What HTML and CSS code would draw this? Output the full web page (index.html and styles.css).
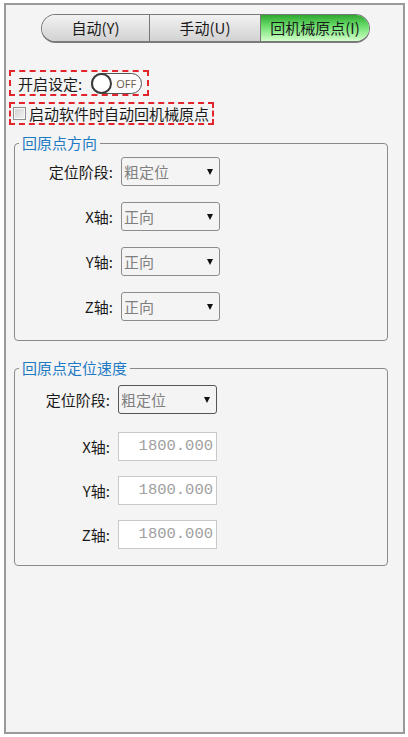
FILE: index.html
```html
<!DOCTYPE html>
<html lang="zh-CN">
  <head>
    <meta charset="UTF-8" />
    <meta name="viewport" content="width=device-width, initial-scale=1.0" />
    <title>回机械原点</title>
    <link rel="stylesheet" href="styles.css">
  </head>
  <body>
    <div class="panel">
      <div class="tabs">
        <div class="tab">自动(Y)</div>
        <div class="tab">手动(U)</div>
        <div class="tab active">回机械原点(I)</div>
      </div>

      <div class="mark switch-row">
        <span>开启设定:</span>
        <span class="switch">
          <span class="knob"></span>
          <span class="switch-text">OFF</span>
        </span>
      </div>

      <div class="mark check-row">
        <span class="box"></span>
        <span>启动软件时自动回机械原点</span>
      </div>

      <fieldset class="group direction">
        <legend>回原点方向</legend>
        <div class="row">
          <span class="label">定位阶段:</span>
          <div class="select">粗定位<span class="arrow"></span></div>
        </div>
        <div class="row">
          <span class="label">X轴:</span>
          <div class="select">正向<span class="arrow"></span></div>
        </div>
        <div class="row">
          <span class="label">Y轴:</span>
          <div class="select">正向<span class="arrow"></span></div>
        </div>
        <div class="row">
          <span class="label">Z轴:</span>
          <div class="select">正向<span class="arrow"></span></div>
        </div>
      </fieldset>

      <fieldset class="group speed">
        <legend>回原点定位速度</legend>
        <div class="row stage">
          <span class="label">定位阶段:</span>
          <div class="select dark">粗定位<span class="arrow"></span></div>
        </div>
        <div class="row">
          <span class="label">X轴:</span>
          <div class="num">1800.000</div>
        </div>
        <div class="row">
          <span class="label">Y轴:</span>
          <div class="num">1800.000</div>
        </div>
        <div class="row">
          <span class="label">Z轴:</span>
          <div class="num">1800.000</div>
        </div>
      </fieldset>
    </div>
  </body>
</html>
```

FILE: styles.css
```css
body {
  margin: 0;
  background: #ffffff;
  font-family: "Noto Sans CJK SC", "Noto Sans", sans-serif;
  font-size: 15px;
  color: #1a1a1a;
}
.panel {
  margin: 3px 0 0 4px;
  width: 401px;
  height: 731px;
  box-sizing: border-box;
  border: 2px solid #9a9a9a;
  background: #f4f4f4;
}
.tabs {
  display: flex;
  margin: 9px 0 0 35px;
  width: 329px;
  height: 29px;
  box-sizing: border-box;
  border: 1px solid #7a7a7a;
  border-bottom-width: 2px;
  border-radius: 15px;
  overflow: hidden;
}
.tab {
  box-sizing: border-box;
  text-align: center;
  line-height: 26px;
  background: linear-gradient(#f2f2f2, #d2d2d2);
}
.tab:nth-child(1) {
  width: 107px;
}
.tab:nth-child(2) {
  width: 111px;
  border-left: 1px solid #777;
}
.tab:nth-child(3) {
  width: 109px;
  border-left: 1px solid #777;
}
.tab.active {
  background: linear-gradient(#2fa82f, #6fe06f 45%, #d4ffcc);
}
.mark {
  display: flex;
  align-items: center;
  box-sizing: border-box;
  margin-left: 3px;
  border: 2px dashed #e2252d;
}
.switch-row {
  margin-top: 27px;
  width: 140px;
  height: 26px;
  padding-left: 7px;
}
.switch {
  display: flex;
  align-items: center;
  margin-left: 9px;
  width: 51px;
  height: 21px;
  box-sizing: border-box;
  border: 1px solid #555;
  border-radius: 11px;
  background: #fafafa;
}
.knob {
  width: 21px;
  height: 21px;
  margin-left: -1px;
  box-sizing: border-box;
  border: 2px solid #3a3a3a;
  border-radius: 50%;
  background: #ffffff;
}
.switch-text {
  margin-left: 4px;
  font-family: "Open Sans", sans-serif;
  font-size: 11px;
  color: #6a5a4a;
  line-height: 1;
}
.check-row {
  margin-top: 6px;
  width: 205px;
  height: 23px;
  padding-left: 2px;
  line-height: 18px;
}
.box {
  width: 13px;
  height: 13px;
  margin-right: 3px;
  box-sizing: border-box;
  border: 1px solid #8f8f8f;
  background: linear-gradient(135deg, #d0d0d0, #f4f4f4);
  box-shadow: inset 0 0 0 1px #f8f8f8;
}
.group {
  margin: 9px 0 0 8px;
  width: 374px;
  box-sizing: border-box;
  padding: 5px 0 19px;
  border: 1px solid #8a8a8a;
  border-radius: 4px;
  min-width: 0;
}
.group legend {
  margin-left: 4px;
  padding: 0 3px;
  line-height: 18px;
  color: #1f7ac4;
}
.speed {
  margin-top: 18px;
  padding: 8px 0 16px;
}
.row {
  display: flex;
  align-items: center;
  height: 29px;
}
.row + .row {
  margin-top: 16px;
}
.speed .row + .row {
  margin-top: 15px;
}
.speed .row.stage + .row {
  margin-top: 18px;
}
.label {
  width: 98px;
  margin-right: 8px;
  text-align: right;
  line-height: 18px;
}
.speed .label {
  width: 95px;
}
.select {
  position: relative;
  width: 99px;
  height: 29px;
  box-sizing: border-box;
  padding-left: 2px;
  border: 1px solid #8c8c8c;
  border-radius: 3px;
  line-height: 27px;
  color: #7f7f7f;
}
.select.dark {
  border-color: #555;
}
.arrow {
  position: absolute;
  right: 6px;
  top: 11px;
  width: 0;
  height: 0;
  border-left: 3.5px solid transparent;
  border-right: 3.5px solid transparent;
  border-top: 6px solid #111;
}
.num {
  width: 99px;
  height: 29px;
  box-sizing: border-box;
  padding-right: 3px;
  border: 1px solid #c8c8c8;
  background: #ffffff;
  text-align: right;
  font-family: "Liberation Mono", monospace;
  font-size: 15.5px;
  line-height: 27px;
  color: #a0a0a0;
}
```
